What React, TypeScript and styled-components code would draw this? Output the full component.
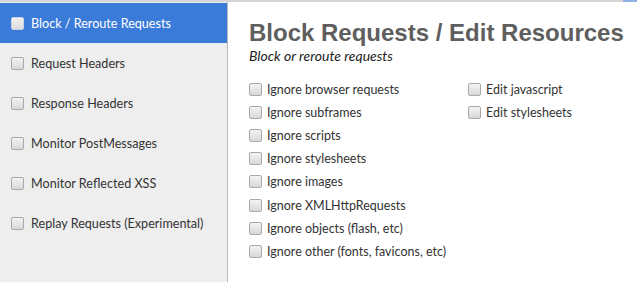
import React from "react";
import styled, { createGlobalStyle } from "styled-components";

const Global = createGlobalStyle`
  html, body { margin: 0; padding: 0; background: #fff; }
  body { font-family: Lato, "Open Sans", sans-serif; color: #333; }
`;

const Page = styled.div`
  width: 637px;
  height: 282px;
  display: flex;
  flex-direction: column;
  overflow: hidden;
`;

const TopRule = styled.div`
  height: 2px;
  background: #d6d6d6;
  flex: none;
  display: flex;
  justify-content: flex-end;
`;

const TopAccent = styled.div`
  width: 14px;
  height: 2px;
  background: #8fb2e3;
`;

const Body = styled.div`
  flex: 1;
  display: flex;
  min-height: 0;
`;

const Sidebar = styled.nav`
  width: 227px;
  flex: none;
  background: #eeeeee;
  border-right: 1px solid #b9b9b9;
  padding-top: 1px;
  display: flex;
  flex-direction: column;
`;

const NavItem = styled.div<{ $active?: boolean }>`
  height: 40px;
  display: flex;
  align-items: center;
  gap: 7px;
  padding-left: 11px;
  font-size: 12.6px;
  color: ${(p) => (p.$active ? "#fff" : "#333")};
  background: ${(p) => (p.$active ? "#3a7bd9" : "transparent")};
`;

const Box = styled.span<{ $light?: boolean }>`
  width: 11px;
  height: 11px;
  flex: none;
  border: 1px solid ${(p) => (p.$light ? "#c9d3e2" : "#a9a9a9")};
  border-radius: 2px;
  background: ${(p) =>
    p.$light
      ? "linear-gradient(#f2f2f2, #dcdcdc)"
      : "linear-gradient(#f4f4f4, #d8d8d8)"};
`;

const Main = styled.main`
  flex: 1;
  padding: 16px 0 0 21px;
`;

const Title = styled.h1`
  margin: 0;
  font-family: "Liberation Sans", Arial, sans-serif;
  font-weight: bold;
  font-size: 24px;
  line-height: 30px;
  color: #5e5e5e;
`;

const Subtitle = styled.div`
  font-style: italic;
  font-size: 14px;
  line-height: 16px;
  margin-top: 0;
  color: #222;
`;

const Options = styled.div`
  margin-top: 14px;
  display: grid;
  grid-template-columns: 219px auto;
`;

const Column = styled.div`
  display: flex;
  flex-direction: column;
`;

const Option = styled.label`
  height: 23.1px;
  display: flex;
  align-items: center;
  gap: 5px;
  font-size: 12.5px;
  color: #333;
`;

const nav = [
  "Block / Reroute Requests",
  "Request Headers",
  "Response Headers",
  "Monitor PostMessages",
  "Monitor Reflected XSS",
  "Replay Requests (Experimental)",
];

const left = [
  "Ignore browser requests",
  "Ignore subframes",
  "Ignore scripts",
  "Ignore stylesheets",
  "Ignore images",
  "Ignore XMLHttpRequests",
  "Ignore objects (flash, etc)",
  "Ignore other (fonts, favicons, etc)",
];

const right = ["Edit javascript", "Edit stylesheets"];

export default function App() {
  return (
    <Page>
      <Global />
      <TopRule>
        <TopAccent />
      </TopRule>
      <Body>
        <Sidebar>
          {nav.map((n, i) => (
            <NavItem key={n} $active={i === 0}>
              <Box $light={i === 0} />
              {n}
            </NavItem>
          ))}
        </Sidebar>
        <Main>
          <Title>Block Requests / Edit Resources</Title>
          <Subtitle>Block or reroute requests</Subtitle>
          <Options>
            <Column>
              {left.map((o) => (
                <Option key={o}>
                  <Box />
                  {o}
                </Option>
              ))}
            </Column>
            <Column>
              {right.map((o) => (
                <Option key={o}>
                  <Box />
                  {o}
                </Option>
              ))}
            </Column>
          </Options>
        </Main>
      </Body>
    </Page>
  );
}
